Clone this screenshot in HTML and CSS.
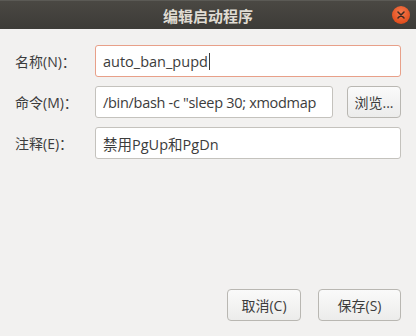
FILE: index.html
```html
<!DOCTYPE html>
<html lang="zh-CN">
<head>
<meta charset="UTF-8">
<title>编辑启动程序</title>
<link rel="stylesheet" href="styles.css">
</head>
<body>
<div class="window">
    <div class="titlebar">
        <span class="title">编辑启动程序</span>
        <span class="close-btn">
            <svg width="8" height="8" viewBox="0 0 8 8"><path d="M1 1 L7 7 M7 1 L1 7" stroke="#3a2a22" stroke-width="1.5" stroke-linecap="round"/></svg>
        </span>
    </div>

    <div class="content">
        <div class="form">
            <label class="field-label">名称(N)：</label>
            <div class="entry focused">auto_ban_pupd<span class="caret"></span></div>

            <label class="field-label">命令(M)：</label>
            <div class="entry-row">
                <div class="entry command-entry">/bin/bash -c "sleep 30; xmodmap</div>
                <button class="btn browse-btn">浏览...</button>
            </div>

            <label class="field-label">注释(E)：</label>
            <div class="entry">禁用PgUp和PgDn</div>
        </div>

        <div class="actions">
            <button class="btn action-btn">取消(C)</button>
            <button class="btn action-btn save-btn">保存(S)</button>
        </div>
    </div>
</div>
</body>
</html>
```

FILE: styles.css
```css
body {
    margin: 0;
    font-family: 'Open Sans', 'Noto Sans CJK SC', sans-serif;
    background-color: #f2f1f0;
    color: #3c3c3c;
}
.window {
    width: 416px;
    height: 336px;
    display: flex;
    flex-direction: column;
    background-color: #f2f1f0;
}
.titlebar {
    height: 29px;
    flex-shrink: 0;
    display: flex;
    align-items: center;
    justify-content: center;
    position: relative;
    background: linear-gradient(#4a4843, #3c3b37);
    border-top: 1px solid #5b5a55;
    box-sizing: border-box;
}
.title {
    font-family: 'Noto Sans CJK SC', sans-serif;
    font-weight: bold;
    font-size: 15px;
    color: #dfdbd2;
}
.close-btn {
    position: absolute;
    right: 6px;
    top: 5px;
    width: 18px;
    height: 18px;
    border-radius: 50%;
    background: radial-gradient(circle at 50% 35%, #f47a4e, #e2501f 70%, #c9431a);
    display: flex;
    align-items: center;
    justify-content: center;
}
.content {
    flex: 1;
    display: flex;
    flex-direction: column;
    justify-content: space-between;
    padding: 16px 15px 15px 15px;
}
.form {
    display: grid;
    grid-template-columns: 80px minmax(0, 1fr);
    row-gap: 9px;
    align-items: center;
}
.field-label {
    font-size: 14px;
}
.entry {
    height: 32px;
    box-sizing: border-box;
    padding: 0 7px;
    display: flex;
    align-items: center;
    background-color: #fff;
    border: 1px solid #c4c2bd;
    border-radius: 3px;
    font-size: 14.5px;
    white-space: nowrap;
    overflow: hidden;
}
.entry.focused {
    border-color: #e8a089;
}
.command-entry {
    letter-spacing: -0.3px;
}
.caret {
    display: inline-block;
    width: 1px;
    height: 17px;
    background-color: #3c3c3c;
    margin-left: 1px;
}
.entry-row {
    display: flex;
    gap: 14px;
}
.entry-row .entry {
    flex: 1;
    min-width: 0;
}
.btn {
    font-family: 'Open Sans', 'Noto Sans CJK SC', sans-serif;
    font-size: 14px;
    color: #3c3c3c;
    height: 32px;
    background: linear-gradient(#fafafa, #ececeb);
    border: 1px solid #b9b7b2;
    border-radius: 4px;
    padding: 0;
}
.browse-btn {
    width: 54px;
    flex-shrink: 0;
}
.actions {
    display: flex;
    justify-content: flex-end;
    gap: 17px;
}
.action-btn {
    width: 74px;
}
.save-btn {
    width: 83px;
}
```
